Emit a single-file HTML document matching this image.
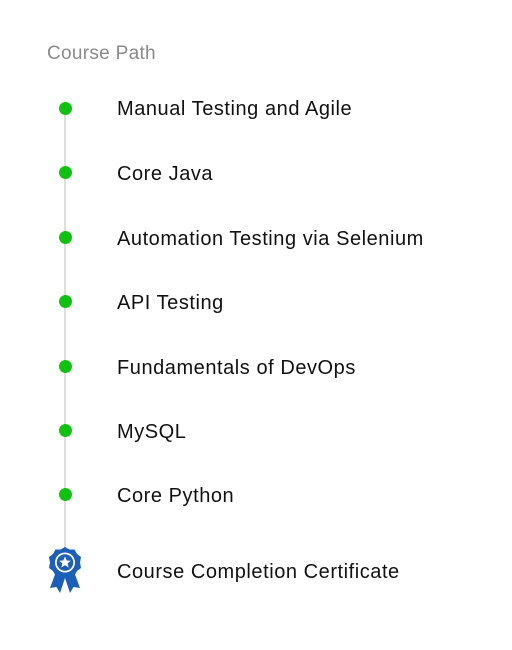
<!DOCTYPE html><html><head><style>
body{margin:0;width:512px;height:650px;background:#fff;font-family:"Liberation Sans",sans-serif;position:relative;overflow:hidden}
.t{position:absolute;left:117px;font-size:20px;letter-spacing:0.55px;color:#111;line-height:22px}
.d{position:absolute;left:59px;width:13px;height:13px;border-radius:50%;background:#11c111}
</style></head><body>
<div style="position:absolute;left:47px;top:43px;font-size:19px;letter-spacing:0.3px;color:#8a8a8a">Course Path</div>
<div style="position:absolute;left:64px;top:108px;width:2px;height:442px;background:#ddd"></div>
<div class="d" style="top:102px"></div><div class="t" style="top:98px">Manual Testing and Agile</div>
<div class="d" style="top:166px"></div><div class="t" style="top:163px">Core Java</div>
<div class="d" style="top:231px"></div><div class="t" style="top:228px">Automation Testing via Selenium</div>
<div class="d" style="top:295px"></div><div class="t" style="top:292px">API Testing</div>
<div class="d" style="top:360px"></div><div class="t" style="top:357px">Fundamentals of DevOps</div>
<div class="d" style="top:424px"></div><div class="t" style="top:421px">MySQL</div>
<div class="d" style="top:488px"></div><div class="t" style="top:485px">Core Python</div>
<svg style="position:absolute;left:48px;top:547px" width="34" height="48" viewBox="0 0 34 48">
<path d="M9 22 L2 41 L8.5 40 L12 46 L17 31 Z" fill="#1b5fb8"/>
<path d="M25 22 L32 41 L25.5 40 L22 46 L17 31 Z" fill="#1b5fb8"/>
<polygon points="17,0 21.5,2.5 26.5,2.5 29,7 33,10 32,15.5 33,21 29,24 26.5,28.5 21.5,28.5 17,31 12.5,28.5 7.5,28.5 5,24 1,21 2,15.5 1,10 5,7 7.5,2.5 12.5,2.5" fill="#1b5fb8"/>
<circle cx="17" cy="15.5" r="10" fill="#fff"/><circle cx="17" cy="15.5" r="8.3" fill="#1b5fb8"/>
<polygon points="17,9.5 18.7,13.5 22.8,13.8 19.6,16.4 20.7,20.5 17,18.2 13.3,20.5 14.4,16.4 11.2,13.8 15.3,13.5" fill="#fff"/>
</svg>
<div class="t" style="top:561px">Course Completion Certificate</div>
</body></html>
